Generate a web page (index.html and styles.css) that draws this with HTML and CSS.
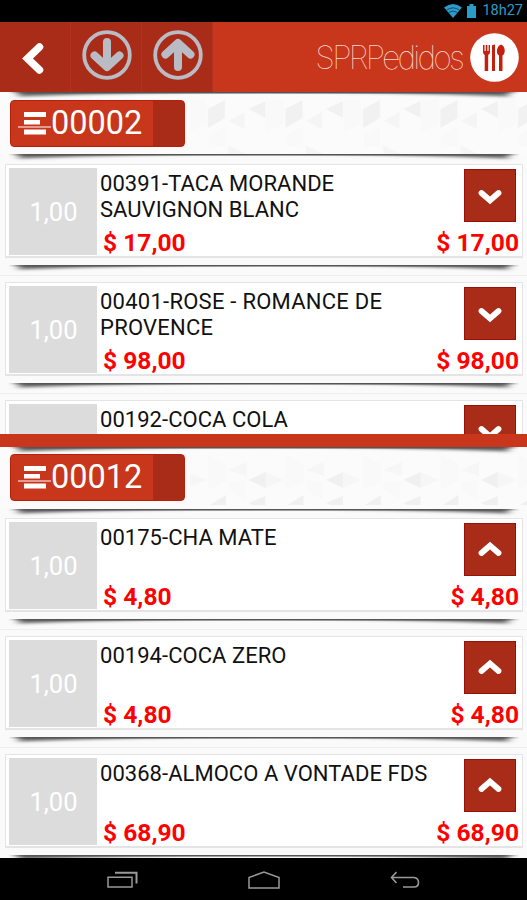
FILE: index.html
```html
<!DOCTYPE html>
<html lang="pt-BR">
<head>
    <meta charset="UTF-8">
    <meta name="viewport" content="width=device-width, initial-scale=1.0">
    <title>SPRPedidos</title>
    <link rel="stylesheet" href="styles.css">
</head>
<body>

    <!-- shared shapes -->
    <svg class="defs" width="0" height="0">
        <defs>
            <filter id="soft" x="-5%" y="-60%" width="110%" height="220%">
                <feGaussianBlur stdDeviation="4 1.4"/>
            </filter>
            <linearGradient id="edge">
                <stop offset="0" stop-color="#555" stop-opacity="0"/>
                <stop offset="0.04" stop-color="#555"/>
                <stop offset="0.96" stop-color="#555"/>
                <stop offset="1" stop-color="#555" stop-opacity="0"/>
            </linearGradient>
            <pattern id="triangles" width="77.5" height="118" patternUnits="userSpaceOnUse" x="16" y="0">
                <path fill="#f1f1f1" d="M0 17l17-8v17z M37 17l17-9v18l-17 10z"/>
                <path fill="#f5f5f5" d="M57.500 29l16-9v17z M57 62V53l18 9z"/>
                <path fill="#f9f9f9" d="M18 8h17v24l-17 8z M38 42l16-7v20H38z"/>
            </pattern>
            <pattern id="diamonds" width="77.500" height="118" patternUnits="userSpaceOnUse" x="16" y="0">
                <path fill="#f0f0f0" d="M0 33l17-8v16z M0 56l17-7v9H4z M39 58l16-10v10z"/>
                <path fill="#f6f6f6" d="M17 25l18 8-18 8z M57.500 23l18-8v14z"/>
                <path fill="#f9f9f9" d="M37 8l18 9v18l-18 8z M58 34h16v18l-16-8z"/>
            </pattern>
            <symbol id="shadow" viewBox="0 0 527 10" preserveAspectRatio="none">
                <path filter="url(#soft)" fill="#666" d="M20 -5H507L509 4.500Q390 0 263 -1Q140 0 18 4.500Z"/>
                <path fill="url(#edge)" d="M8 0H520V1.500H8Z"/>
            </symbol>
            <symbol id="down" viewBox="0 0 24 16">
                <path fill="none" stroke="#fff" stroke-width="5.800" stroke-linecap="round" d="M3.500 4L12 11.500L20.500 4"/>
            </symbol>
            <symbol id="up" viewBox="0 0 24 16">
                <path fill="none" stroke="#fff" stroke-width="5.800" stroke-linecap="round" d="M3.500 12L12 4.500L20.500 12"/>
            </symbol>
            <symbol id="lines" viewBox="0 0 34 24">
                <path fill="#fff" d="M7 0h22v5H7z M7 8h16v4.500H7z M7 17.500h22v5H7z M1 14.400h33v1.200H1z"/>
            </symbol>
        </defs>
    </svg>

    <div class="status-bar">
        <svg width="18" height="14" viewBox="0 0 18 14">
            <path fill="#2b9cc9" d="M0 3.500Q9-3.500 18 3.500L9 14Z"/>
            <path fill="none" stroke="#000" stroke-width=".5" d="M2.500 6.200Q9 1.500 15.500 6.200M4.600 8.800Q9 5.500 13.400 8.800"/>
        </svg>
        <svg class="battery" width="9" height="14" viewBox="0 0 9 14">
            <path fill="#2b9cc9" d="M2.500 0h4v2H9v12H0V2h2.500z"/>
        </svg>
        <span class="clock">18h27</span>
    </div>

    <div class="header">
        <div class="header-btn">
            <svg width="24" height="34" viewBox="0 0 24 34">
                <path fill="none" stroke="#fff" stroke-width="7.500" stroke-linecap="round" d="M18.500 6L6.500 17.500L18.500 29"/>
            </svg>
        </div>
        <div class="header-btn sort">
            <svg width="50" height="50" viewBox="0 0 50 50">
                <circle cx="25" cy="25" r="22.800" fill="none" stroke="#b9bcc4" stroke-width="3.800"/>
                <path fill="none" stroke="#b9bcc4" stroke-width="8" stroke-linecap="round" stroke-linejoin="round" d="M25 12V35M12.500 25.500L25 37L37.500 25.500"/>
            </svg>
        </div>
        <div class="header-btn sort">
            <svg width="50" height="50" viewBox="0 0 50 50">
                <circle cx="25" cy="25" r="22.800" fill="none" stroke="#b9bcc4" stroke-width="3.800"/>
                <path fill="none" stroke="#b9bcc4" stroke-width="8" stroke-linecap="round" stroke-linejoin="round" d="M25 37V15M12.500 24.500L25 13L37.500 24.500"/>
            </svg>
        </div>
        <div class="brand">SPRPedidos</div>
        <svg class="logo" width="49" height="49" viewBox="0 0 49 49">
            <circle cx="24.500" cy="24.500" r="24.300" fill="#fff"/>
            <g fill="#c4200f">
                <path d="M13 12h1.500v6h1.200v-6h1.700v6h1.200v-6H20v7q0 2-1.800 3v16h-3.500V22Q13 21 13 19z"/>
                <path d="M22 38V13q0-1.500 3-1.500V38z"/>
                <path d="M31 11.500c5 2 4.500 9.500 1.500 11V38h-3.500V22.500c-3-1.500-3-9 2-11z"/>
            </g>
        </svg>
    </div>

    <div class="panel first">
        <div class="panel-head">
            <svg class="texture"><rect x="190" width="337" height="62" fill="url(#triangles)"/></svg>
            <svg class="shadow"><use href="#shadow"/></svg>
            <div class="order"><svg width="34" height="24"><use href="#lines"/></svg>00002</div>
        </div>
        <div class="item">
            <svg class="shadow top"><use href="#shadow"/></svg>
            <div class="card">
                <div class="qty">1,00</div>
                <div class="name">00391-TACA MORANDE<br>SAUVIGNON BLANC</div>
                <div class="toggle"><svg width="24" height="16"><use href="#down"/></svg></div>
                <div class="prices"><span>$ 17,00</span><span>$ 17,00</span></div>
            </div>
            <svg class="shadow"><use href="#shadow"/></svg>
        </div>
        <div class="item">
            <div class="card">
                <div class="qty">1,00</div>
                <div class="name wide">00401-ROSE - ROMANCE DE<br>PROVENCE</div>
                <div class="toggle"><svg width="24" height="16"><use href="#down"/></svg></div>
                <div class="prices"><span>$ 98,00</span><span>$ 98,00</span></div>
            </div>
            <svg class="shadow"><use href="#shadow"/></svg>
        </div>
        <div class="item">
            <div class="card">
                <div class="qty"></div>
                <div class="name">00192-COCA COLA</div>
                <div class="toggle"><svg width="24" height="16"><use href="#down"/></svg></div>
            </div>
        </div>
    </div>

    <div class="divider"></div>

    <div class="panel second">
        <div class="panel-head">
            <svg class="texture"><rect x="190" width="337" height="62" fill="url(#diamonds)"/></svg>
            <svg class="shadow"><use href="#shadow"/></svg>
            <div class="order"><svg width="34" height="24"><use href="#lines"/></svg>00012</div>
        </div>
        <div class="item">
            <svg class="shadow top"><use href="#shadow"/></svg>
            <div class="card">
                <div class="qty">1,00</div>
                <div class="name">00175-CHA MATE</div>
                <div class="toggle"><svg width="24" height="16"><use href="#up"/></svg></div>
                <div class="prices"><span>$ 4,80</span><span>$ 4,80</span></div>
            </div>
            <svg class="shadow"><use href="#shadow"/></svg>
        </div>
        <div class="item">
            <div class="card">
                <div class="qty">1,00</div>
                <div class="name">00194-COCA ZERO</div>
                <div class="toggle"><svg width="24" height="16"><use href="#up"/></svg></div>
                <div class="prices"><span>$ 4,80</span><span>$ 4,80</span></div>
            </div>
            <svg class="shadow"><use href="#shadow"/></svg>
        </div>
        <div class="item">
            <div class="card">
                <div class="qty">1,00</div>
                <div class="name">00368-ALMOCO A VONTADE FDS</div>
                <div class="toggle"><svg width="24" height="16"><use href="#up"/></svg></div>
                <div class="prices"><span>$ 68,90</span><span>$ 68,90</span></div>
            </div>
            <svg class="shadow"><use href="#shadow"/></svg>
        </div>
    </div>

    <div class="nav-bar">
        <svg width="31" height="17" viewBox="0 0 31 17">
            <path fill="none" stroke="#999" stroke-width="1.500" d="M1 6.300h24v9.700H1z"/>
            <path fill="none" stroke="#999" stroke-width="2" d="M8 1.800h21.500V12.500"/>
        </svg>
        <svg width="32" height="18" viewBox="0 0 32 18">
            <path fill="none" stroke="#999" stroke-width="1.500" d="M1 17V6.500L16 1L31 6.500V17Z"/>
        </svg>
        <svg width="30" height="18" viewBox="0 0 30 18">
            <path fill="none" stroke="#999" stroke-width="1.600" d="M6.500 1L1.500 6.500L6.500 12M1.500 6.500H24Q28.500 7 28.500 11.500T24 16H13"/>
        </svg>
    </div>

</body>
</html>
```
FILE: styles.css
```css
* {
    box-sizing: border-box;
}

body {
    margin: 0;
    width: 527px;
    height: 900px;
    overflow: hidden;
    background-color: #fafafa;
    font-family: Roboto, "Liberation Sans", sans-serif;
}

svg {
    display: block;
    flex-shrink: 0;
}

.defs {
    position: absolute;
}

.status-bar {
    display: flex;
    justify-content: flex-end;
    align-items: center;
    height: 22px;
    padding-right: 4px;
    background-color: #000;
}

.battery {
    margin-left: 5px;
}

.clock {
    margin-left: 6px;
    color: #2b9cc9;
    font-size: 14.5px;
    line-height: 22px;
}

.header {
    display: flex;
    align-items: center;
    height: 70px;
    padding-right: 8px;
    background-color: #c8361b;
}

.header-btn {
    display: flex;
    align-items: center;
    justify-content: center;
    width: 71px;
    height: 70px;
    padding: 1px 5px 0 0;
    background-color: #a82c18;
    border-right: 1px solid #b13220;
}

.header-btn.sort {
    padding: 0 0 5px 2px;
}

.brand {
    margin-left: auto;
    margin-right: 6px;
    color: #ffd9d0;
    font-family: Inter, Roboto, sans-serif;
    font-size: 32px;
    font-weight: 100;
    letter-spacing: -2.8px;
    white-space: nowrap;
}

.logo {
    margin-top: 1px;
    margin-left: 2px;
}

.panel {
    overflow: hidden;
}

.first {
    height: 342px;
}

.second {
    height: 411px;
}

.panel-head {
    position: relative;
    height: 62px;
    padding: 8px 0 0 10px;
    background-color: #fbfbfb;
}

.texture {
    position: absolute;
    top: 0;
    left: 0;
    width: 527px;
    height: 62px;
}

.shadow {
    width: 527px;
    height: 10px;
}

.panel-head .shadow {
    position: absolute;
    top: 0;
    left: 0;
}

.order {
    position: relative;
    display: flex;
    align-items: center;
    width: 175px;
    height: 47px;
    padding-left: 6px;
    border: 1px solid #b81e08;
    border-radius: 4px;
    background: linear-gradient(to right, #c8361b 142px, #a82c18 142px);
    color: #fff;
    font-size: 32.5px;
    line-height: 47px;
}

.second .order {
    margin-top: -1px;
}

.item {
    position: relative;
    height: 118px;
    padding: 6px 4px 0 5px;
    border-bottom: 1px solid #eee;
}

.panel-head + .item {
    height: 122px;
    padding-top: 10px;
}

.second .panel-head + .item {
    height: 121px;
    padding-top: 9px;
}

.card {
    display: grid;
    grid-template-columns: 88px 1fr 52px;
    grid-template-rows: 61px 25px;
    column-gap: 3px;
    height: 94px;
    padding: 3px 6px 3px 3px;
    background-color: #fff;
    border: 1px solid #e4e4e4;
    border-width: 1px 1px 2px;
}

.qty {
    grid-row: 1 / 3;
    height: 87px;
    padding-left: 1px;
    background-color: #dcdcdc;
    color: #fff;
    font-size: 25.5px;
    line-height: 89px;
    text-align: center;
}

.name {
    padding-top: 3px;
    color: #111;
    font-size: 22px;
    line-height: 26px;
    letter-spacing: 0.04px;
    white-space: nowrap;
}

.name.wide {
    letter-spacing: 0.25px;
}

.toggle {
    display: flex;
    align-items: center;
    justify-content: center;
    width: 52px;
    height: 53px;
    margin-top: 1px;
    padding-top: 3px;
    background-color: #a82c18;
    border: 1px solid #991008;
}

.second .toggle {
    padding: 0 0 2px;
}

.prices {
    grid-column: 2 / 4;
    display: flex;
    justify-content: space-between;
    padding-left: 3px;
    margin-right: -3px;
    color: #ff0000;
    font-size: 24.6px;
    font-weight: 700;
    line-height: 28px;
}

.item .shadow {
    position: absolute;
    left: 0;
    bottom: 0;
}

.item .shadow.top {
    top: 0;
}

.divider {
    height: 13px;
    background-color: #c8361b;
}

.nav-bar {
    display: flex;
    justify-content: space-between;
    height: 42px;
    padding: 13px 107px 0;
    background-color: #000;
}
```
